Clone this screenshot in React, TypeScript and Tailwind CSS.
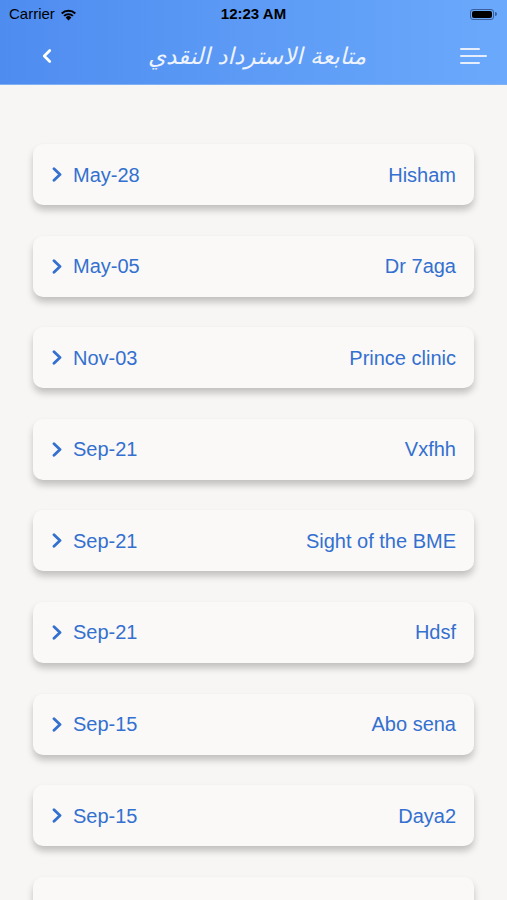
import { ChevronLeft } from "lucide-react";

type Entry = { date: string; name: string };

const entries: Entry[] = [
  { date: "May-28", name: "Hisham" },
  { date: "May-05", name: "Dr 7aga" },
  { date: "Nov-03", name: "Prince clinic" },
  { date: "Sep-21", name: "Vxfhh" },
  { date: "Sep-21", name: "Sight of the BME" },
  { date: "Sep-21", name: "Hdsf" },
  { date: "Sep-15", name: "Abo sena" },
  { date: "Sep-15", name: "Daya2" },
  { date: "Sep-15", name: "" },
];

function StatusBar() {
  return (
    <div className="h-[28px] flex items-center justify-between px-[9px] text-[15px] text-black">
      <div className="flex items-center gap-[5px] w-[120px]">
        <span>Carrier</span>
        <svg width="17" height="13" viewBox="0 0 17 13">
          <path d="M8.5 12.5 L5.6 9.4 A4.2 4.2 0 0 1 11.4 9.4 Z" fill="black" />
          <path d="M3.4 7.2 A7.4 7.4 0 0 1 13.6 7.2 L12.2 8.6 A5.4 5.4 0 0 0 4.8 8.6 Z" fill="black" />
          <path d="M1 4.8 A10.8 10.8 0 0 1 16 4.8 L14.6 6.2 A8.8 8.8 0 0 0 2.4 6.2 Z" fill="black" />
        </svg>
      </div>
      <span className="font-semibold">12:23 AM</span>
      <div className="w-[120px] flex justify-end pr-[1px]">
        <div className="flex items-center">
          <div className="w-[24px] h-[11px] rounded-[3px] border border-[#3a5f9a] p-[1px]">
            <div className="w-full h-full rounded-[2px] bg-black" />
          </div>
          <div className="w-[2px] h-[4px] rounded-r-sm bg-[#3a5f9a] ml-[1px]" />
        </div>
      </div>
    </div>
  );
}

function NavBar() {
  return (
    <div className="h-[56px] flex items-center justify-between pl-[36px] pr-[20px]">
      <ChevronLeft size={22} strokeWidth={3} className="text-white" />
      <div
        className="text-[23px] text-[#eef3fd] italic -ml-[4px]"
        style={{ fontFamily: '"DejaVu Sans", sans-serif' }}
        dir="rtl"
      >
        متابعة الاسترداد النقدي
      </div>
      <div className="flex flex-col gap-[5px] items-start">
        <div className="w-[20px] h-[2px] bg-[#e6eefc] rounded-full" />
        <div className="w-[27px] h-[2px] bg-[#e6eefc] rounded-full" />
        <div className="w-[20px] h-[2px] bg-[#e6eefc] rounded-full" />
      </div>
    </div>
  );
}

function Chevron() {
  return (
    <svg width="10" height="15" viewBox="0 0 10 15" className="shrink-0">
      <polyline
        points="2,1.8 8,7.5 2,13.2"
        fill="none"
        stroke="#3470cf"
        strokeWidth="2.8"
        strokeLinecap="round"
        strokeLinejoin="round"
      />
    </svg>
  );
}

export default function App() {
  return (
    <div
      className="w-[507px] h-[900px] overflow-hidden bg-[#f7f6f4]"
      style={{ fontFamily: '"Liberation Sans", Arial, sans-serif' }}
    >
      {/* header */}
      <div className="h-[85px] bg-gradient-to-r from-[#4f8cf0] to-[#6aa9fb] border-b border-[#7fb0f2]">
        <StatusBar />
        <NavBar />
      </div>

      {/* list */}
      <div className="flex flex-col gap-[30.6px] px-[33px] pt-[59px]">
        {entries.map((e, i) => (
          <div
            key={i}
            className="h-[61px] shrink-0 rounded-[10px] bg-[#faf9f8] shadow-[0_5px_7px_rgba(0,0,0,0.22)] flex items-center justify-between pl-[19px] pr-[18px] text-[20px] text-[#3470cf]"
          >
            <div className="flex items-center gap-[11px]">
              <Chevron />
              <span>{e.date}</span>
            </div>
            <span>{e.name}</span>
          </div>
        ))}
      </div>
    </div>
  );
}
